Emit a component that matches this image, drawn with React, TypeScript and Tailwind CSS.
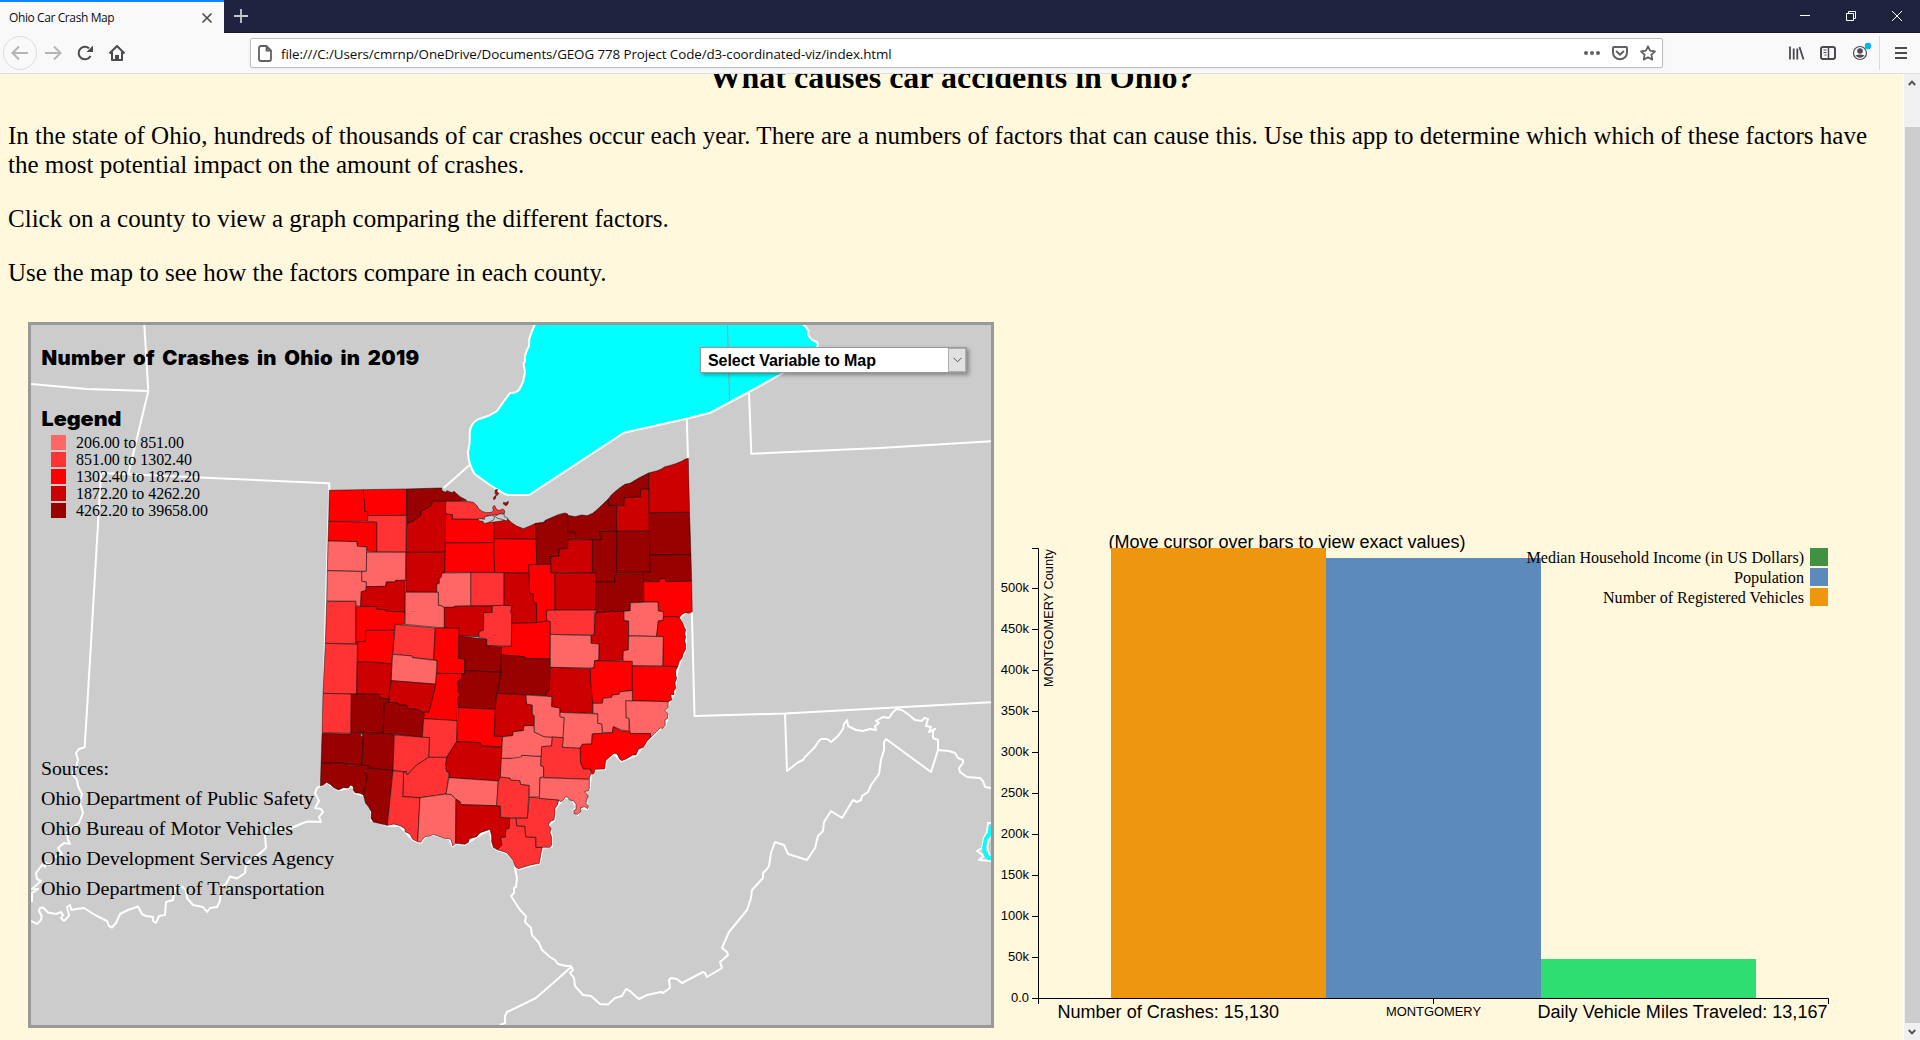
import React from "react";

/* Five-step red ramp used by the choropleth, from fewest to most crashes. */
const RAMP = ["#ff6666", "#ff3333", "#ff0000", "#cc0000", "#990000"];

/* [ramp class, polygon outline] for each county. */
const COUNTIES: [number, string][] = [
  [2, "58,151 160,149 162,180 164,181 164,214 173,216 172,244 56,244"],
  [2, "160,149 290,147 289,226 173,227 173,216 164,214 164,181 162,180"],
  [4, "290,147 395,144 396,152 407,157 410,152 426,158 432,154 450,170 470,181 440,184 369,184 362,198 345,208 333,214 333,226 312,242 300,247 290,252"],
  [3, "369,184 407,184 407,336 289,337 290,252 300,247 312,242 333,226 333,214 345,208 362,198"],
  [1, "407,184 470,184 490,187 500,196 507,207 518,215 530,218 545,217 550,211 548,202 553,196 558,205 562,210 570,211 578,207 584,212 583,221 575,219 566,224 545,226 530,228 520,236 505,238 427,237 427,224 407,222"],
  [1, "173,227 289,226 288,336 200,335 200,247 173,244"],
  [2, "56,244 200,247 200,335 170,334 170,320 142,319 140,305 54,303"],
  [2, "407,222 427,224 427,238 505,238 515,242 525,250 551,246 551,308 406,308"],
  [3, "552,246 575,243 592,236 605,248 620,258 640,266 660,258 677,250 679,298 552,296"],
  [0, "54,303 140,305 142,319 170,321 169,394 52,392"],
  [0, "170,337 288,337 286,421 257,421 256,426 229,426 227,439 169,440 168,425 155,424 155,395 169,394"],
  [3, "288,337 406,337 404,398 396,399 394,412 388,415 388,430 380,433 380,457 288,456"],
  [2, "406,309 551,308 554,397 404,397"],
  [2, "552,296 679,298 680,373 656,374 658,399 554,397"],
  [4, "677,250 700,247 706,241 720,235 745,224 765,219 773,222 773,275 797,277 797,298 773,300 773,325 747,327 747,349 722,350 722,373 680,373"],
  [4, "773,226 795,230 815,225 832,227 848,220 860,210 875,196 895,177 896,195 920,197 920,240 923,246 920,250 920,274 869,275 870,285 876,299 797,298 797,277 773,275"],
  [4, "895,177 904,165 915,155 930,143 945,133 960,130 985,115 1016,99 1016,147 992,147 991,171 943,173 942,196 895,196"],
  [3, "942,196 943,173 991,171 992,147 1016,147 1018,273 920,274 920,197"],
  [3, "1016,99 1040,93 1053,88 1065,80 1075,78 1095,72 1115,64 1125,58 1135,55 1139,217 1018,218"],
  [4, "1018,218 1139,217 1143,344 1019,345"],
  [4, "920,274 1018,274 1021,396 917,397"],
  [4, "869,275 920,274 920,397 915,400 915,427 857,425 857,400 847,398 847,299 876,299 870,285"],
  [3, "773,300 847,299 847,398 722,398 722,350 747,349 747,327 773,325"],
  [4, "1019,345 1143,344 1145,424 1067,425 1065,416 1049,417 1048,425 1001,424 1000,397 1021,396"],
  [2, "1001,425 1048,425 1049,417 1065,416 1067,425 1145,424 1147,515 1137,520 1125,518 1115,524 1108,533 1100,530 1060,530 1060,515 1045,513 1044,486 1001,485"],
  [4, "857,425 915,427 917,398 1000,397 1001,486 962,488 962,512 942,514 908,515 906,510 903,514 857,519"],
  [3, "734,400 857,399 857,510 735,510"],
  [2, "656,374 722,373 722,398 734,400 734,510 710,511 712,543 680,548 679,490 671,487 669,462 659,460"],
  [3, "582,398 656,400 659,460 669,462 671,487 679,490 680,548 605,550 605,520 601,515 606,498 582,496"],
  [1, "482,398 581,398 581,496 551,497 482,497"],
  [0, "396,399 482,398 482,497 433,499 432,502 400,502 397,498 386,496 385,457 380,457 380,433 388,430 388,415 394,412"],
  [0, "52,392 155,395 155,424 169,426 168,452 154,455 152,499 138,497 137,484 50,483"],
  [3, "169,440 227,439 229,426 256,426 257,421 286,421 285,515 227,514 225,509 199,508 197,500 152,499 154,455 168,452"],
  [0, "286,457 385,457 385,496 397,498 400,502 403,503 403,564 285,553"],
  [1, "50,485 137,484 138,611 46,610"],
  [2, "138,500 197,500 199,508 225,509 227,514 285,516 283,553 256,553 253,571 167,571 167,604 143,605 142,613 138,610"],
  [3, "403,502 432,502 433,499 546,498 547,517 521,518 520,571 508,574 506,590 447,588 446,565 403,564"],
  [1, "547,497 582,496 606,498 601,515 605,520 604,619 530,617 530,597 506,592 508,574 521,571 521,518 547,517"],
  [1, "256,553 376,564 371,659 308,653 306,648 248,643"],
  [2, "376,564 447,565 446,655 464,657 464,701 380,700 381,662 371,659"],
  [4, "447,588 530,598 530,617 575,620 573,697 464,692 464,657 446,655"],
  [2, "605,550 680,548 712,543 722,545 720,657 645,655 643,650 574,645 575,620 604,619"],
  [1, "710,511 853,510 853,585 721,583 721,545 710,540"],
  [3, "855,519 903,514 906,510 908,515 942,514 942,541 956,543 955,630 940,632 939,661 854,662 866,658 867,612 843,610 843,587 853,585"],
  [0, "961,488 1044,486 1045,513 1060,515 1060,541 1045,543 1040,589 956,587 956,543 942,541 942,514 961,512"],
  [2, "1060,530 1100,530 1108,533 1118,548 1122,560 1127,570 1124,582 1127,590 1124,603 1127,612 1127,628 1120,640 1116,655 1108,664 1103,680 1058,678 1060,590 1040,589 1045,543 1060,541"],
  [0, "956,588 1060,590 1058,678 939,676 940,632 955,630"],
  [0, "721,583 843,587 843,610 867,612 866,660 854,662 852,684 721,682"],
  [1, "46,610 142,613 140,762 39,760"],
  [2, "143,605 167,604 167,571 253,571 248,643 245,672 200,667 143,666"],
  [0, "248,643 306,648 308,653 381,662 377,732 243,722"],
  [3, "142,666 200,667 245,672 243,722 236,778 210,774 208,763 140,762"],
  [3, "243,722 377,733 374,750 357,817 325,813 322,808 293,805 290,796 267,795 265,790 236,787"],
  [2, "380,700 464,701 455,704 455,718 443,723 446,750 449,765 443,775 441,842 341,836 342,817 357,817 374,750 377,732"],
  [4, "464,692 573,697 566,740 560,760 556,808 445,803 443,775 450,763 443,752 446,740 443,723 455,718 455,704 464,701"],
  [4, "574,645 643,650 645,655 720,657 718,752 710,758 706,767 562,760 566,740 573,697"],
  [1, "39,760 124,762 123,880 36,878"],
  [4, "124,762 208,763 210,774 236,778 236,787 223,790 219,880 123,874"],
  [4, "223,790 236,787 265,790 267,795 290,796 293,805 322,808 325,813 342,817 337,892 219,880"],
  [1, "341,836 441,842 440,905 410,952 356,952 358,893 337,892"],
  [2, "445,803 556,808 553,888 578,890 575,920 515,918 510,908 440,905"],
  [3, "560,760 648,765 650,792 667,795 667,822 673,828 672,857 642,857 640,872 610,875 608,887 578,890 553,888 556,808"],
  [4, "36,880 123,882 123,875 152,877 152,888 160,890 156,976 130,973 80,968 33,970"],
  [4, "152,877 219,880 253,885 249,992 178,984 170,978 156,976 160,890"],
  [1, "253,885 358,893 356,952 320,975 303,992 295,1003 289,1002 289,995 249,992"],
  [3, "440,905 510,908 515,918 577,922 571,1023 417,1013 417,998 410,995 406,988 409,982 406,975 410,952"],
  [1, "356,952 410,952 406,980 410,995 417,998 415,1018 408,1062 380,1066 330,1073 278,1070 281,996 289,995 289,1002 295,1003 303,992 320,975"],
  [4, "33,970 80,968 130,974 178,978 178,984 165,995 172,1005 168,1030 160,1065 150,1060 135,1058 130,1050 130,1040 122,1035 115,1044 100,1043 85,1050 70,1042 62,1034 50,1027 40,1035 31,1038"],
  [4, "178,984 249,992 232,1156 215,1152 190,1146 183,1135 184,1115 174,1098 167,1090 160,1065 168,1030 172,1005 165,998"],
  [1, "249,992 281,996 278,1070 330,1073 323,1205 308,1198 300,1182 285,1175 285,1166 270,1157 252,1152 232,1156"],
  [0, "330,1073 380,1066 408,1062 425,1064 438,1078 437,1210 428,1218 424,1202 418,1196 404,1195 390,1190 370,1183 360,1188 345,1190 338,1198 332,1207 323,1205"],
  [0, "417,1013 565,1023 560,1097 453,1094 450,1085 438,1078 425,1064 408,1062"],
  [3, "438,1078 450,1085 453,1094 571,1098 572,1132 599,1135 598,1165 588,1168 586,1192 572,1192 576,1215 562,1229 550,1222 545,1205 545,1188 540,1168 528,1172 510,1178 500,1190 478,1196 475,1207 465,1213 437,1210"],
  [1, "599,1135 618,1135 620,1157 645,1159 647,1190 678,1192 678,1222 697,1222 693,1240 688,1270 665,1274 645,1280 625,1286 616,1280 610,1262 590,1238 562,1229 576,1215 572,1192 586,1192 588,1168 598,1165"],
  [1, "658,1071 746,1080 742,1095 735,1105 735,1118 732,1140 722,1143 715,1155 723,1165 720,1177 725,1192 725,1215 720,1222 678,1222 678,1192 647,1190 645,1159 620,1157 619,1134 652,1134"],
  [1, "571,1011 600,1014 602,1020 630,1022 632,1033 658,1036 652,1134 572,1132 571,1098 560,1097 565,1023"],
  [0, "574,955 605,955 610,950 635,946 694,949 692,977 701,980 701,1010 690,1013 688,1071 658,1071 658,1036 632,1033 630,1022 602,1020 600,1014 571,1011"],
  [0, "578,890 608,887 610,875 640,872 642,857 672,857 673,876 702,890 727,891 725,918 697,920 694,949 635,946 634,951 605,955 574,955"],
  [0, "648,765 725,770 725,798 750,804 750,830 763,833 760,893 702,890 673,876 673,828 667,822 667,795 650,792"],
  [3, "721,682 841,686 842,725 848,728 848,820 750,817 750,804 725,800 727,770 706,767 710,758 718,752"],
  [2, "854,662 967,664 967,752 930,755 927,763 907,765 905,772 880,775 877,790 848,790 842,727 841,686 852,684"],
  [2, "967,678 1103,680 1097,692 1097,705 1100,715 1095,728 1097,745 1091,754 1092,764 1082,763 1085,780 1075,785 967,782"],
  [0, "947,782 1075,785 1074,802 1065,812 1073,820 1073,835 1065,840 1066,855 1058,865 1050,864 1040,875 1022,892 1020,881 960,880 957,836 948,834"],
  [0, "849,790 877,790 880,775 905,772 907,765 927,763 930,755 967,752 967,782 947,782 948,833 957,835 957,875 935,870 910,860 907,878 877,878 875,852 863,850 863,822 849,820"],
  [0, "750,817 863,822 863,850 875,852 877,880 847,882 845,912 817,913 810,925 757,922 763,833 750,830"],
  [2, "847,882 907,878 910,860 935,873 958,873 962,881 1022,881 1022,892 1010,905 1000,922 985,928 978,945 968,945 950,956 935,962 928,956 922,942 912,940 900,950 887,962 884,987 855,988 852,1000 845,1003 842,988 820,987 812,970 810,925 817,913 845,912"],
  [1, "727,891 760,893 757,922 810,925 812,970 820,987 842,988 842,1003 837,1018 701,1012 701,980 692,977 695,920 725,918"],
  [0, "690,1013 838,1018 838,1045 835,1052 823,1055 835,1068 830,1078 828,1090 835,1098 833,1106 824,1100 812,1103 812,1115 803,1123 793,1121 791,1112 798,1108 798,1092 790,1082 778,1080 774,1072 767,1070 758,1082 752,1085 746,1080 688,1075"],
  /* Lake Erie islands */
  [3, "556,150 563,148 560,156 566,160 561,167 555,160"],
  [3, "551,172 558,166 556,176 551,179"],
  [3, "581,187 588,189 595,184 594,192 588,197 580,192"],
];

/* Inlets of Sandusky Bay cut out of the shoreline. */
const BAYS = [
  "503,238 512,236 524,238 524,230 545,226 554,230 551,240 533,248 523,251 519,244 509,243",
  "556,228 568,222 582,222 583,230 594,235 590,243 575,238 560,234",
];

const STATE_LINES = [
  "31,384 86.7,389 148.3,391",
  "144.3,325 148.3,391 128.3,474.3",
  "101,483 100.6,473 128.3,474.3 329.3,483.3 329.3,490 326,600 323.5,700 320.7,785",
  "101,473 100,490 90,660 84.7,747.3 79,749 76,753 78,760 76,768 73,772 73,775 77,780 78,786 82,794 80,803 83,813 79,823 72,828 67,833 68,840 70,844 64,843 58,848 62,854 55,857 50,865 46,863 45,867 42,865 36,873 37,879 41,881 32,889 38,889 32,893 32,902",
  "31,921 37,924 41,920 41.7,916 39,911 40,908 43,907.5 48,912.5 56,914 61,912 63,915 61,918 64,921 68,917 69,915 67,907 70,905 71.5,910 76,909 84,908 95,915 107,921 109,926 112,927.5 116,923 120,914 128,910 138,906.5 142,914 146,916 153,917 153,921 156,923 159,916 165,915 166,902 173,900 175,888 179,886 183,887 186,891 187,898 193,905 203,907 207,912 210,908 217,907 220,901 221,887 226,884 230,876.5 237,878.5 245,873 246,864 258,855 266,848 265,835 268,827 287,830 303,823 308,821.5 321,822 319,817 323,812 321,809 315,808 319,801 315,793 317,788 326.7,782",
  "515,860 515,868 517,878 516,887 514,888 514,893 511,896 520,910 526,916 525,922 531,928 532,935 539,943 542,950 550,957 555,960 558,964 566,966 571,966 573,970 570,973 574,978 575,986 583,995 591,996 600,1004 608,1004.5 615,998 622,996 626,989 630,991 633,994 639,999 647,995 661,992 663,993 670,988 669,980 671,978 677,979 682,983 703,972 705,973 707,977 722,968 720,962 728,955 727,952 722,948 729,932 747,910 751,898 752,890 763,878 763,873 767,869 769,866 771,853 775,842 784,845 788,854 807,860 815,848 818,836 823,831 824,822 831,811 842,818 853,800 857,802 861,800 862,796 868,792 871,785 879,774 881,760 884,750 884,742 886,739 931,772 938,750 949,751 955,753 958,758 963,760 963,763 959,768 960,772 967,777 980,778 983,781 985,787 991,788",
  "571,967 560,977 536,998 507,1012 505,1016 505,1023 500,1025",
  "686.8,418.7 688.3,470 694.5,716 785,713.5 991,702.3",
  "749,392 751.3,453.7 880,448 991,441.3",
  "469.6,465 443.6,488",
  "938,750 938,740 933,738 933,731 935,729 929,732 931,727 926,726 928,719 924,718 922,721 915,720 909,715 902,710 897,709 893,712 889,718 883,717 876,721 879,723 875,726 876,730 870,729 863,731 856,730 848,726 847,720 844,724 843,729 838,736 831,742 827,739 821,739 818,742 815,747 805,757 803,760 797,763 787,771 785,713",
];

const RIVER_EDGE =
  "31,1038 50,1027 62,1034 85,1050 115,1044 122,1035 132,1045 135,1058 160,1065 184,1110 184,1140 232,1156 270,1157 308,1198 323,1205 332,1207 345,1190 370,1183 418,1196 428,1218 437,1210 465,1213 500,1190 540,1168 548,1218 562,1229 590,1238 612,1262 625,1286 688,1270 697,1222 725,1219 725,1192 715,1155 732,1140 735,1105 752,1085 767,1070 790,1082 800,1102 791,1112 803,1123 812,1103 833,1106 828,1085 823,1055 838,1045 842,1003 855,988 884,987 887,962 912,940 935,962 978,945 1010,905 1022,892 1050,866 1066,855 1073,828 1065,812 1078,785 1092,760 1100,700 1104,680 1127,625 1127,570 1108,533 1125,518 1147,515";

const LAKE =
  "M534.6,325 L532,331 L529.3,339 L529,346 L527,350 L525,356 L525,361 L523.5,364 L525,372 L523,382 L519,390 L515,392.5 L510,393 L504,401 L497,411 L488,416 L477.5,419.5 Q470.5,424 469.8,432 L469.6,443 L468,452 Q468,463 474.6,474 L490,485 L500,491 Q505,495 509,495 L529,495 L624,432.7 L686.4,418.7 L710.4,412.7 L749,392 L783,373 L803,360 L815,352 L818,345 L817,342 L812,340 L808,335 L808.6,331 L806,327 L803.6,325 L803,320 L536,320 Z";

const serif = "font-['Liberation_Serif',serif]";
const sans = "font-['Liberation_Sans',sans-serif]";

type LabelProps = {
  x: number;
  y: number;
  w?: number;
  size: number;
  end?: boolean;
  className?: string;
  children: string;
};

function Label({ x, y, w, size, end, className, children }: LabelProps) {
  return (
    <text
      x={x}
      y={y}
      fontSize={size}
      textLength={w}
      lengthAdjust="spacingAndGlyphs"
      textAnchor={end ? "end" : "start"}
      className={className}
    >
      {children}
    </text>
  );
}

const LEGEND: [string, number][] = [
  ["206.00 to 851.00", 108],
  ["851.00 to 1302.40", 116],
  ["1302.40 to 1872.20", 124],
  ["1872.20 to 4262.20", 124],
  ["4262.20 to 39658.00", 132],
];

const SOURCES: [string, number][] = [
  ["Sources:", 68],
  ["Ohio Department of Public Safety", 273],
  ["Ohio Bureau of Motor Vehicles", 252],
  ["Ohio Development Services Agency", 293],
  ["Ohio Department of Transportation", 283.5],
];

function CrashMap() {
  return (
    <div className="relative h-[706px] w-[966px] shrink-0 border-[3px] border-[#999999] bg-[#cccccc]">
      <svg className="block" width="960" height="700" viewBox="31 325 960 700">
        <path d={LAKE} fill="#00ffff" stroke="#fff" strokeWidth="2" />
        <path d="M727.5,325 L729.6,401" stroke="#999" strokeWidth="1" />
        <g fill="none" stroke="#fff" strokeWidth="2" strokeLinejoin="round">
          {STATE_LINES.map((p) => (
            <polyline key={p} points={p} />
          ))}
          <path d="M992,823 L988,823 L987,832 L984,838 L982,848 L977,851 L984,856 L979,860 L992,861" />
        </g>
        <path d="M992,827 L989,824 L988,832 L984,838 L982,848 L984,856 L988,860 L992,860 L992,857 L986,850 L987,840 L992,834 Z" fill="#0ff" />
        <path d="M992,836 Q984,844 990,856" fill="none" stroke="#fff" strokeWidth="1.5" />
        <g transform="translate(310 440) scale(0.33333)" strokeLinejoin="round">
          <polyline points={RIVER_EDGE} fill="none" stroke="#fff" strokeWidth="8" />
          <g stroke="#000" strokeOpacity="0.75" strokeWidth="2">
            {COUNTIES.map(([c, p]) => (
              <polygon key={p} points={p} fill={RAMP[c]} />
            ))}
            {BAYS.map((p) => (
              <polygon key={p} points={p} fill="#ccc" />
            ))}
          </g>
        </g>
        <g className="font-[Inter,sans-serif] font-black [word-spacing:3px]">
          <Label x={41.5} y={365} w={378} size={19.5} className="tracking-[0.3px]">Number of Crashes in Ohio in 2019</Label>
          <Label x={41.5} y={426} w={80} size={20}>Legend</Label>
        </g>
        <g className={serif}>
          {LEGEND.map(([t, w], i) => (
            <g key={t}>
              <rect x={51} y={435 + 17 * i} width="15" height="15" fill={RAMP[i]} />
              <Label x={76} y={447.7 + 17 * i} w={w} size={16}>{t}</Label>
            </g>
          ))}
          {SOURCES.map(([t, w], i) => (
            <Label key={t} x={41} y={775 + 30 * i} w={w} size={19.2}>{t}</Label>
          ))}
        </g>
      </svg>
      <div className="absolute left-[669px] top-[22px] flex h-[26px] w-[267px] items-stretch border border-[#999] bg-white shadow-[2px_2px_4px_rgba(0,0,0,0.35)]">
        <span className={`${sans} flex-1 whitespace-nowrap pl-[7px] text-[16px] font-bold leading-[25px] tracking-[-0.05px]`}>Select Variable to Map</span>
        <span className="flex w-[18px] items-center justify-center border border-[#adadad] bg-[#e1e1e1]">
          <svg width="9" height="6" viewBox="0 0 9 6"><path d="M.5 .8 L4.5 4.8 L8.5 .8" fill="none" stroke="#555" /></svg>
        </span>
      </div>
    </div>
  );
}

const TICKS = ["0.0", "50k", "100k", "150k", "200k", "250k", "300k", "350k", "400k", "450k", "500k"];

function BarChart() {
  return (
    <svg className="block" width="850" height="500" viewBox="994 530 850 500">
      <g className={sans}>
        <Label x={1108.5} y={547.5} w={357} size={18}>(Move cursor over bars to view exact values)</Label>
        <rect x="1111" y="548" width="215" height="450" fill="#ee960e" />
        <rect x="1326" y="558" width="215" height="440" fill="#5b8abb" />
        <rect x="1541" y="959" width="215" height="39" fill="#2ede70" />
        <path d="M1032,548.5 H1038.5 V998.5 H1032 M1038.5,1004 V998.5 H1828.5 V1004 M1433.5,998 V1004" fill="none" stroke="#000" />
        {TICKS.map((t, i) => {
          const y = Math.round(998 - 41.05 * i) + 0.5;
          return (
            <g key={t}>
              <path d={`M1032,${y} H1038`} stroke="#000" />
              <Label x={1029} y={y + 3.5} size={13} end>{t}</Label>
            </g>
          );
        })}
        <Label x={1386} y={1016} w={95} size={12.5}>MONTGOMERY</Label>
        <g transform="translate(1053 687) rotate(-90)">
          <Label x={0} y={0} w={138} size={13}>MONTGOMERY County</Label>
        </g>
        <Label x={1057.5} y={1018} w={221.5} size={18}>Number of Crashes: 15,130</Label>
        <Label x={1537.5} y={1018} w={290} size={18}>Daily Vehicle Miles Traveled: 13,167</Label>
      </g>
      <g className={serif}>
        <rect x="1810" y="548" width="18" height="18" fill="#419143" />
        <rect x="1810" y="568" width="18" height="18" fill="#5b8abb" />
        <rect x="1810" y="588" width="18" height="18" fill="#ee960e" />
        <Label x={1804} y={563} w={277.5} size={16} end>Median Household Income (in US Dollars)</Label>
        <Label x={1804} y={583} w={70} size={16} end>Population</Label>
        <Label x={1804} y={603} w={201} size={16} end>Number of Registered Vehicles</Label>
      </g>
    </svg>
  );
}

function TabStrip() {
  return (
    <div className="flex h-[33px] shrink-0 items-stretch bg-[#202340]">
      <div className="flex w-[224px] items-center justify-between border-t-2 border-[#0a84ff] bg-[#f9f9fa] pl-[9px] pr-[11px]">
        <span className="whitespace-nowrap font-['Open_Sans',sans-serif] text-[12px] tracking-[-0.4px] text-[#0c0c0d]">Ohio Car Crash Map</span>
        <svg width="12" height="12" viewBox="0 0 12 12"><path d="M1.5 1.5 L10.5 10.5 M10.5 1.5 L1.5 10.5" stroke="#4a4a4f" strokeWidth="1.6" /></svg>
      </div>
      <div className="flex flex-1 items-center justify-between border-b border-[#15172b] pl-[10px]">
        <svg width="14" height="14" viewBox="0 0 14 14"><path d="M7 0 V14 M0 7 H14" stroke="#c6c7cf" strokeWidth="1.8" /></svg>
        <div className="flex items-center gap-[36px] pr-[18px]">
          <svg width="10" height="10" viewBox="0 0 10 10"><path d="M0 4.5 H10" stroke="#fff" /></svg>
          <svg width="10" height="10" viewBox="0 0 10 10"><path d="M.5 2.5 H7.5 V9.5 H.5 Z M2.5 2.5 V.5 H9.5 V7.5 H7.5" fill="none" stroke="#fff" /></svg>
          <svg width="10" height="10" viewBox="0 0 10 10"><path d="M0 0 L10 10 M10 0 L0 10" stroke="#fff" /></svg>
        </div>
      </div>
    </div>
  );
}

function Toolbar() {
  return (
    <div className="flex h-[41px] shrink-0 items-center border-b border-[#dedee0] bg-[#f9f9fa]">
      <svg width="250" height="40" viewBox="0 33 250 40" fill="none" className="shrink-0">
        <circle cx="20" cy="53" r="16.5" stroke="#dcdcdc" />
        <path d="M28 53 H13 M19 46.5 L12.5 53 L19 59.5" stroke="#b4b4b6" strokeWidth="2" />
        <path d="M45 53 H60 M54 46.5 L60.5 53 L54 59.5" stroke="#b4b4b6" strokeWidth="2" />
        <path d="M90.5 56 A6.3 6.3 0 1 1 89 48.2" stroke="#4a4a4f" strokeWidth="2" />
        <path d="M93 45.5 V52 H86.5 Z" fill="#4a4a4f" />
        <path d="M109.5 53.5 L117 46 L124.5 53.5 M112 52 V60 H122 V52" stroke="#4a4a4f" strokeWidth="2" strokeLinejoin="round" />
        <path d="M115 60 V55 H119 V60 Z" fill="#4a4a4f" />
      </svg>
      <div className="flex h-[30px] flex-none basis-[1413px] items-center rounded-[2px] border border-[#bdbdbe] bg-white pl-[7px] pr-[6px] shadow-[0_1px_3px_rgba(0,0,0,0.06)]">
        <svg width="14" height="17" viewBox="0 0 14 17" fill="none"><path d="M3 1 H8.5 L13 5.5 V14 Q13 16 11 16 H3 Q1 16 1 14 V3 Q1 1 3 1 Z M8.5 1 V5.5 H13" stroke="#616165" strokeWidth="1.8" /></svg>
        <span className="ml-[9px] flex-1 whitespace-nowrap pt-[2px] font-['Open_Sans',sans-serif] text-[13.4px] tracking-[-0.1px] text-[#0c0c0d]">
          file:///C:/Users/cmrnp/OneDrive/Documents/GEOG 778 Project Code/d3-coordinated-viz/index.html
        </span>
        <div className="flex items-center gap-[12px]">
          <svg width="16" height="16" viewBox="0 0 16 16" fill="#616165"><circle cx="2" cy="8" r="2" /><circle cx="8" cy="8" r="2" /><circle cx="14" cy="8" r="2" /></svg>
          <svg width="16" height="16" viewBox="0 0 16 16" fill="none" stroke="#616165" strokeWidth="2" strokeLinecap="round" strokeLinejoin="round"><path d="M2 2 H14 Q15 2 15 3 V7.5 A7 6.8 0 0 1 1 7.5 V3 Q1 2 2 2 Z M4.7 6.5 L8 9.7 L11.3 6.5" /></svg>
          <svg width="16" height="16" viewBox="0 0 16 16" fill="none" stroke="#616165" strokeWidth="1.8" strokeLinejoin="round"><path d="M8 1.3 L10.1 5.7 L15 6.3 L11.4 9.7 L12.3 14.6 L8 12.2 L3.7 14.6 L4.6 9.7 L1 6.3 L5.9 5.7 Z" /></svg>
        </div>
      </div>
      <svg width="257" height="40" viewBox="1663 33 257 40" fill="none" stroke="#4a4a4f" className="shrink-0">
        <path d="M1790 46.5 V59.5 M1793.7 48.5 V59.5 M1797.3 48.5 V59.5 M1799.5 47 L1803.5 59.5" strokeWidth="1.8" />
        <rect x="1821" y="47" width="14" height="12" rx="2" strokeWidth="2" />
        <path d="M1828.5 47 V59" strokeWidth="1.5" />
        <path d="M1823.5 50 H1826.5 M1823.5 52.5 H1826.5 M1824.5 55 H1826.5" />
        <circle cx="1860" cy="53" r="6.5" strokeWidth="1.2" />
        <circle cx="1860" cy="51" r="2.8" fill="#4a4a4f" stroke="none" />
        <path d="M1855.5 55.5 Q1860 53.5 1864.5 55.5 Q1860 60 1855.5 55.5 Z" fill="#4a4a4f" stroke="none" />
        <circle cx="1868" cy="46" r="3.2" fill="#00b3f4" stroke="none" />
        <path d="M1879.5 36 V70" stroke="#dcdcdd" />
        <path d="M1895 48 H1907 M1895 53 H1907 M1895 58 H1907" strokeWidth="2" />
      </svg>
    </div>
  );
}

function Scrollbar() {
  return (
    <div className="flex w-[17px] shrink-0 flex-col items-center border-l border-white bg-[#f0f0f0]">
      <div className="flex h-[53px] shrink-0 pt-[6px]">
        <svg width="8" height="6" viewBox="0 0 8 6"><path d="M.8 5 L4 1.6 L7.2 5" fill="none" stroke="#505050" strokeWidth="1.9" /></svg>
      </div>
      <div className="w-[15px] flex-1 bg-[#cdcdcd]" />
      <div className="flex h-[17px] items-center">
        <svg width="8" height="6" viewBox="0 0 8 6"><path d="M.8 1 L4 4.4 L7.2 1" fill="none" stroke="#505050" strokeWidth="1.9" /></svg>
      </div>
    </div>
  );
}

export default function App() {
  return (
    <div className="flex h-[1040px] w-[1920px] flex-col overflow-hidden bg-[#fff8dc] text-black">
      <TabStrip />
      <Toolbar />
      <div className="flex min-h-0 flex-1">
        <main className="flex-1 overflow-hidden bg-[#fff8dc]">
          <div className={`${serif} flow-root h-[248px] whitespace-nowrap px-2 text-[25.03px] leading-[29px]`}>
            <h2 className="-mt-[14px] h-[36px] text-center text-[32px] font-bold leading-[35px]">What causes car accidents in Ohio?</h2>
            <p className="mt-[25px]">
              In the state of Ohio, hundreds of thousands of car crashes occur each year. There are a numbers of factors that can cause this. Use this app to determine which which of these factors have<br />the most potential impact on the amount of crashes.
            </p>
            <p className="mt-[25px]">Click on a county to view a graph comparing the different factors.</p>
            <p className="mt-[25px]">Use the map to see how the factors compare in each county.</p>
          </div>
          <div className="flex items-start pl-[28px]">
            <CrashMap />
            <div className="mt-[208px]">
              <BarChart />
            </div>
          </div>
        </main>
        <Scrollbar />
      </div>
    </div>
  );
}
